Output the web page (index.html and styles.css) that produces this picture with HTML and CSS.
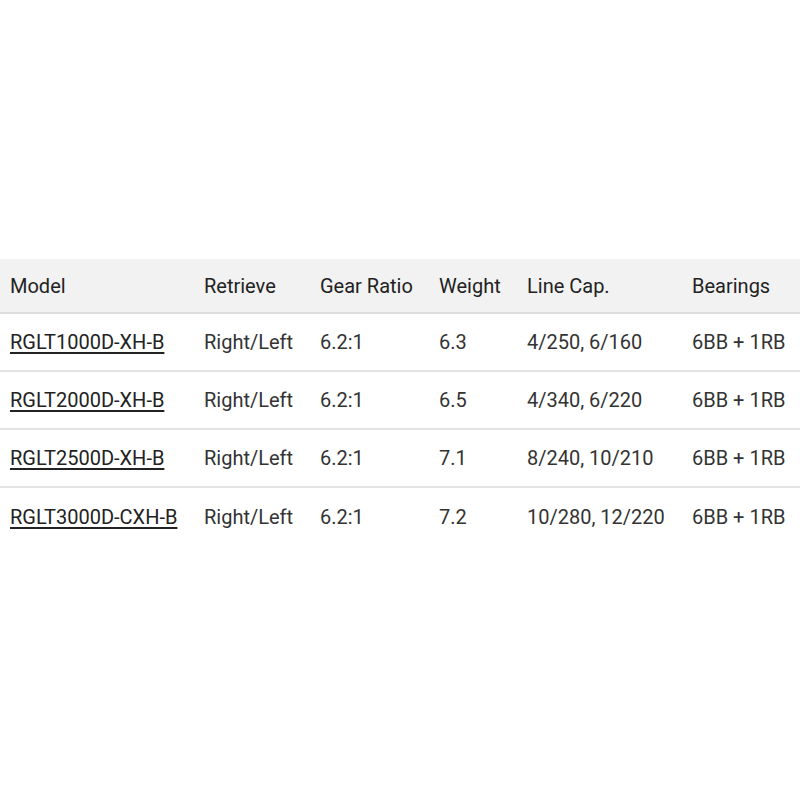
FILE: index.html
```html
<!DOCTYPE html>
<html>
<head>
<meta charset="utf-8">
<link rel="stylesheet" href="styles.css">
</head>
<body>
<table class="specs">
  <thead>
    <tr>
      <th class="c-model">Model</th>
      <th class="c-ret">Retrieve</th>
      <th class="c-gear">Gear Ratio</th>
      <th class="c-weight">Weight</th>
      <th class="c-line">Line Cap.</th>
      <th class="c-bear">Bearings</th>
    </tr>
  </thead>
  <tbody>
    <tr>
      <td><a href="#">RGLT1000D-XH-B</a></td>
      <td>Right/Left</td>
      <td>6.2:1</td>
      <td>6.3</td>
      <td>4/250, 6/160</td>
      <td>6BB + 1RB</td>
    </tr>
    <tr>
      <td><a href="#">RGLT2000D-XH-B</a></td>
      <td>Right/Left</td>
      <td>6.2:1</td>
      <td>6.5</td>
      <td>4/340, 6/220</td>
      <td>6BB + 1RB</td>
    </tr>
    <tr>
      <td><a href="#">RGLT2500D-XH-B</a></td>
      <td>Right/Left</td>
      <td>6.2:1</td>
      <td>7.1</td>
      <td>8/240, 10/210</td>
      <td>6BB + 1RB</td>
    </tr>
    <tr>
      <td><a href="#">RGLT3000D-CXH-B</a></td>
      <td>Right/Left</td>
      <td>6.2:1</td>
      <td>7.2</td>
      <td>10/280, 12/220</td>
      <td>6BB + 1RB</td>
    </tr>
  </tbody>
</table>
</body>
</html>
```
FILE: styles.css
```css
html, body {
  margin: 0;
  padding: 0;
  background: #ffffff;
}
body {
  padding-top: 259px;
  font-family: Roboto, "Liberation Sans", sans-serif;
  font-size: 20px;
  color: #333333;
}
.specs {
  width: 800px;
  border-collapse: collapse;
  table-layout: fixed;
}
.specs th,
.specs td {
  box-sizing: border-box;
  text-align: left;
  font-weight: 400;
  padding: 0 0 0 10px;
  white-space: nowrap;
  vertical-align: middle;
}
.specs th {
  height: 54px;
  background: #f2f2f2;
  color: #222222;
  border-bottom: 2px solid #dddddd;
}
.specs td {
  height: 58px;
  border-bottom: 2px solid #e3e3e3;
}
.specs tbody tr:last-child td {
  border-bottom: none;
}
.specs a {
  color: #222222;
  text-decoration: underline;
  text-underline-offset: 3px;
}
.c-model { width: 194px; }
.c-ret { width: 116px; }
.c-gear { width: 119px; }
.c-weight { width: 88px; }
.c-line { width: 165px; }
.c-bear { width: 118px; }
```
